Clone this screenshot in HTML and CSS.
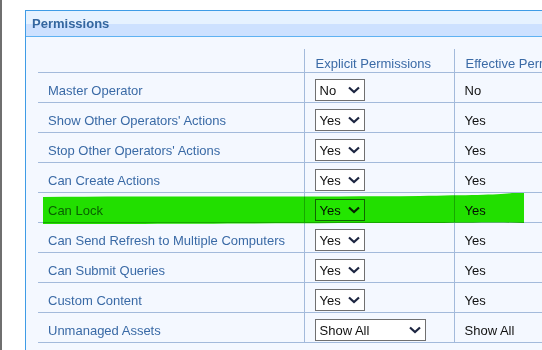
FILE: index.html
```html
<!DOCTYPE html>
<html lang="en">

<head>
  <meta charset="UTF-8">
  <title>Permissions</title>
  <link rel="stylesheet" href="styles.css">
</head>

<body>
  <div class="page">
    <div class="edge"></div>
    <div class="content">
      <div class="panel">
        <div class="panel-title">Permissions</div>
        <div class="panel-body">
          <table class="perm">
            <thead>
              <tr>
                <th class="name"></th>
                <th class="explicit">Explicit Permissions</th>
                <th class="effective">Effective Permissions</th>
              </tr>
            </thead>
            <tbody>
              <tr>
                <td class="name">Master Operator</td>
                <td><div class="sel"><span>No</span><svg width="12" height="8" viewBox="0 0 12 8"><path d="M1 1.5 L6 6 L11 1.5" /></svg></div></td>
                <td class="val">No</td>
              </tr>
              <tr>
                <td class="name">Show Other Operators' Actions</td>
                <td><div class="sel"><span>Yes</span><svg width="12" height="8" viewBox="0 0 12 8"><path d="M1 1.5 L6 6 L11 1.5" /></svg></div></td>
                <td class="val">Yes</td>
              </tr>
              <tr>
                <td class="name">Stop Other Operators' Actions</td>
                <td><div class="sel"><span>Yes</span><svg width="12" height="8" viewBox="0 0 12 8"><path d="M1 1.5 L6 6 L11 1.5" /></svg></div></td>
                <td class="val">Yes</td>
              </tr>
              <tr>
                <td class="name">Can Create Actions</td>
                <td><div class="sel"><span>Yes</span><svg width="12" height="8" viewBox="0 0 12 8"><path d="M1 1.5 L6 6 L11 1.5" /></svg></div></td>
                <td class="val">Yes</td>
              </tr>
              <tr>
                <td class="name">Can Lock</td>
                <td><div class="sel"><span>Yes</span><svg width="12" height="8" viewBox="0 0 12 8"><path d="M1 1.5 L6 6 L11 1.5" /></svg></div></td>
                <td class="val">Yes</td>
              </tr>
              <tr>
                <td class="name">Can Send Refresh to Multiple Computers</td>
                <td><div class="sel"><span>Yes</span><svg width="12" height="8" viewBox="0 0 12 8"><path d="M1 1.5 L6 6 L11 1.5" /></svg></div></td>
                <td class="val">Yes</td>
              </tr>
              <tr>
                <td class="name">Can Submit Queries</td>
                <td><div class="sel"><span>Yes</span><svg width="12" height="8" viewBox="0 0 12 8"><path d="M1 1.5 L6 6 L11 1.5" /></svg></div></td>
                <td class="val">Yes</td>
              </tr>
              <tr>
                <td class="name">Custom Content</td>
                <td><div class="sel"><span>Yes</span><svg width="12" height="8" viewBox="0 0 12 8"><path d="M1 1.5 L6 6 L11 1.5" /></svg></div></td>
                <td class="val">Yes</td>
              </tr>
              <tr>
                <td class="name">Unmanaged Assets</td>
                <td><div class="sel wide"><span>Show All</span><svg width="12" height="8" viewBox="0 0 12 8"><path d="M1 1.5 L6 6 L11 1.5" /></svg></div></td>
                <td class="val">Show All</td>
              </tr>
            </tbody>
          </table>
        </div>
      </div>
    </div>

    <!--marker highlight over the Can Lock row-->
    <svg class="marker" width="542" height="350" viewBox="0 0 542 350">
      <path d="M43 197 C150 196 300 197 420 196 C470 195 500 195 512 193 L524 193 L524 223 C500 222 470 223 420 223 C300 223 150 224 43 224 Z" />
    </svg>
  </div>
</body>

</html>
```

FILE: styles.css
```css
* {
  margin: 0;
  padding: 0;
  box-sizing: border-box;
}

html,
body {
  height: 100%;
  overflow: hidden;
  background-color: #fff;
}

body {
  font-family: "Liberation Sans", Arial, sans-serif;
  font-size: 13px;
}

.page {
  position: relative;
  display: flex;
  height: 100%;
}

/*left window edge*/
.edge {
  width: 2px;
  flex: none;
  background-color: #6f6f6f;
}

.content {
  padding: 10px 0 0 23px;
  flex: none;
}

.panel {
  width: 640px;
  height: 400px;
  border: 1px solid #3f9ce6;
  background-color: #f4f8ff;
}

.panel-title {
  height: 26px;
  padding: 5px 0 0 6px;
  font-weight: bold;
  font-size: 13px;
  line-height: 15px;
  color: #34669f;
  background: linear-gradient(#e6f2ff 13px, #cde1ff 13px);
  border-bottom: 1px solid #5fb2f2;
}

.panel-body {
  padding: 12px 0 0 12px;
}

.perm {
  border-collapse: collapse;
  table-layout: fixed;
  width: 560px;
}

.perm th {
  font-weight: normal;
  text-align: left;
  color: #3a6aa6;
  height: 23px;
  padding: 6px 10px 0 11px;
  line-height: 15px;
  white-space: nowrap;
  overflow: hidden;
  border-bottom: 1px solid #a3badb;
}

.perm th.name {
  width: 266px;
}

.perm th.explicit {
  width: 150px;
  border-left: 1px solid #a3badb;
}

.perm th.effective {
  border-left: 1px solid #a3badb;
}

.perm td {
  height: 30px;
  padding: 6px 10px 1px 10px;
  vertical-align: middle;
  line-height: 15px;
  white-space: nowrap;
  border-bottom: 1px solid #a3badb;
  border-left: 1px solid #a3badb;
}

.perm td.name,
.perm td.val {
  padding-top: 7px;
  padding-bottom: 0;
}

.perm td.name {
  border-left: none;
  color: #3a6aa6;
}

.perm td.val {
  color: #111;
}

/*select box look*/
.sel {
  width: 50px;
  height: 22px;
  display: flex;
  align-items: center;
  justify-content: space-between;
  padding: 1px 4px 0 4px;
  border: 1px solid #707070;
  background-color: #fff;
  color: #111;
}

.sel.wide {
  width: 111px;
}

.sel svg {
  fill: none;
  stroke: #1c2540;
  stroke-width: 2.2;
}

/*green marker stroke*/
.marker {
  position: absolute;
  left: 0;
  top: 0;
  pointer-events: none;
  mix-blend-mode: multiply;
}

.marker path {
  fill: #23e600;
}
```
